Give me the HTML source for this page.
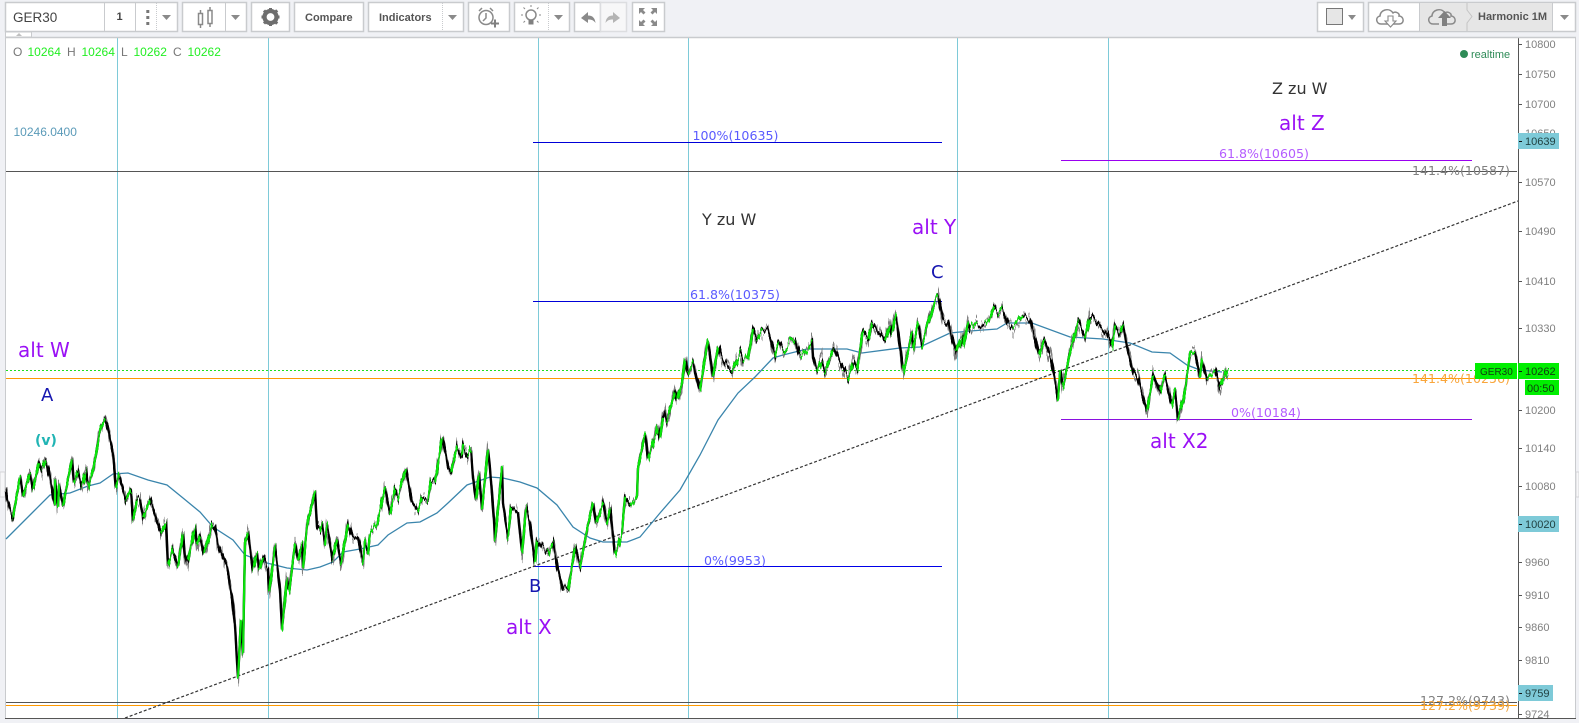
<!DOCTYPE html>
<html><head><meta charset="utf-8"><title>GER30</title>
<style>
html,body{margin:0;padding:0;width:1579px;height:723px;overflow:hidden;background:#f0f1f5}
svg{position:absolute;left:0;top:0;display:block}
text{font-family:"Liberation Sans",sans-serif}
.d{font-family:"DejaVu Sans",sans-serif}
.ax text{font-size:11px;fill:#808080}
.b{fill:#fff;stroke:#c9cbce;stroke-width:1.5}
.t{font-size:11px;font-weight:bold;fill:#555}
.f{font-family:"DejaVu Sans",sans-serif;font-size:12.6px}
.pu{fill:#9a10f5;font-size:20px;font-family:"DejaVu Sans",sans-serif}
.bl{fill:#1616b0;font-size:18px;font-family:"DejaVu Sans",sans-serif}
.ic{fill:none;stroke:#8a8a8a;stroke-width:1.5}
.tr{fill:#8a8a8a}
</style></head><body>
<svg width="1579" height="723" viewBox="0 0 1579 723" xmlns="http://www.w3.org/2000/svg">
<defs>
<filter id="j1" filterUnits="userSpaceOnUse" x="0" y="0" width="1579" height="723" color-interpolation-filters="sRGB">
<feTurbulence type="fractalNoise" baseFrequency="0.55 0.004" numOctaves="1" seed="4" result="n"/>
<feColorMatrix in="n" type="matrix" values="0 0 0 0 0.5  0 1 0 0 0  0 0 0 0 0  0 0 0 0 1" result="m"/>
<feDisplacementMap in="SourceGraphic" in2="m" scale="34" xChannelSelector="R" yChannelSelector="G"/>
</filter>
<filter id="j2" filterUnits="userSpaceOnUse" x="0" y="0" width="1579" height="723" color-interpolation-filters="sRGB">
<feTurbulence type="fractalNoise" baseFrequency="0.45 0.004" numOctaves="1" seed="11" result="n"/>
<feColorMatrix in="n" type="matrix" values="0 0 0 0 0.5  0 1 0 0 0  0 0 0 0 0  0 0 0 0 1" result="m"/>
<feDisplacementMap in="SourceGraphic" in2="m" scale="20" xChannelSelector="R" yChannelSelector="G"/>
</filter>
<polyline id="p" fill="none" points="6,490 7,500 13,517 20,477 23,497 30,473 33,490 39,462 42,470 46,460 50,477 55,506 55,480 58,508 59,485 63,505 72,458 74,483 78,472 82,487 86,470 88,487 93,470 100,430 105,420 108,430 113,453 116,488 119,475 126,500 131,490 133,520 137,500 140,500 143,517 150,500 157,520 161,533 166,522 168,567 173,550 178,565 183,532 185,557 188,563 195,527 197,547 200,537 204,555 212,525 215,528 218,545 227,568 232,597 235,627 238,678 241,620 243,655 245,543 248,532 253,570 257,553 259,570 263,557 268,570 269,593 275,547 280,590 282,630 287,577 289,590 295,543 298,560 302,543 303,570 307,527 315,490 317,527 320,530 322,523 325,543 327,525 333,560 337,540 341,565 348,523 353,537 358,537 363,563 365,542 368,552 370,532 377,525 385,488 390,513 395,490 398,497 406,468 412,503 418,510 422,498 428,500 431,480 435,482 442,437 448,467 451,473 457,447 462,457 463,447 468,457 471,450 473,477 476,500 479,473 482,510 488,447 490,467 494,520 495,542 502,467 503,503 508,537 511,507 518,513 522,553 526,507 530,523 535,563 537,540 542,547 548,553 553,543 558,570 563,590 568,590 575,547 578,560 580,565 587,530 593,503 596,523 603,503 607,523 610,508 615,555 622,533 625,498 630,505 637,497 638,467 645,433 648,460 655,437 658,425 660,438 663,417 665,412 667,420 675,393 677,402 682,383 685,357 688,372 693,363 700,393 708,340 713,377 718,347 722,360 728,368 732,372 740,353 743,362 748,358 753,327 757,338 762,330 768,330 772,343 775,353 778,342 783,350 795,338 800,355 812,342 813,360 817,372 822,360 825,370 833,348 838,358 843,368 848,377 853,362 857,370 863,332 868,340 872,322 880,332 885,340 890,323 892,335 896,315 900,347 903,372 912,333 913,350 918,323 922,345 935,300 938,296 943,320 948,323 956,355 962,337 963,348 968,320 970,329 977,322 985,325 990,320 994,307 998,313 1002,308 1008,323 1013,328 1023,317 1030,320 1035,338 1039,357 1044,340 1051,358 1057,390 1058,397 1060,370 1063,387 1070,353 1078,322 1085,338 1090,315 1102,328 1107,333 1112,347 1115,327 1120,335 1123,327 1127,347 1133,370 1138,378 1145,403 1147,410 1153,375 1160,393 1165,377 1172,407 1175,390 1178,418 1183,400 1190,355 1195,353 1200,377 1202,358 1207,377 1215,370 1220,388 1228,367"/>
</defs>
<!-- chart area -->
<rect x="5.500" y="37.500" width="1570" height="681" fill="#fff" stroke="#c9cbce"/>
<rect x="1576" y="472" width="3" height="25" fill="#f7f7f9" stroke="#d4d4d8" stroke-width="1"/>
<rect x="0" y="472" width="5" height="25" fill="#f7f7f9" stroke="#d4d4d8" stroke-width="1"/>

<!-- vertical lines -->
<g stroke="#7ecad8" stroke-width="1">
<path d="M117.500 38V718M268.500 38V718M538.500 38V718M688.500 38V718M957.500 38V718M1108.500 38V718"/>
</g>

<!-- horizontal lines -->
<path d="M6 171.500H1517" stroke="#555" stroke-width="1"/>
<path d="M6 702.500H1517" stroke="#555" stroke-width="1"/>
<path d="M6 705.500H1517" stroke="#f90" stroke-width="1"/>
<path d="M6 378.500H1517" stroke="#f90" stroke-width="1"/>
<path d="M6 370.500H1475" stroke="#1ee01e" stroke-width="1" stroke-dasharray="2 2"/>
<path d="M533 142.500H942" stroke="#0000d8" stroke-width="1"/>
<path d="M533 301.500H942" stroke="#0000d8" stroke-width="1"/>
<path d="M533 566.500H942" stroke="#0000e8" stroke-width="1"/>
<path d="M1061 160.500H1472" stroke="#9a00f0" stroke-width="1"/>
<path d="M1061 419.500H1472" stroke="#8a10e0" stroke-width="1"/>

<!-- trend line -->
<path d="M125 718L1518 201" stroke="#333" stroke-width="1.200" stroke-dasharray="3 2" fill="none"/>

<!-- moving average -->
<polyline fill="none" stroke="#3a85ac" stroke-width="1.300" points="6,539 20,525 33,512 50,495 70,493 88,486 100,483 113,474 128,473 148,480 167,485 183,498 200,512 213,527 233,540 245,555 267,563 287,568 307,570 320,567 333,562 343,552 360,549 378,545 388,535 407,523 420,522 437,513 448,503 467,485 490,477 503,478 520,482 537,488 557,505 573,527 590,538 603,542 627,542 640,537 660,513 680,490 700,455 718,420 738,393 755,377 773,358 783,355 807,349 847,349 862,353 900,348 920,347 950,333 970,331 997,329 1007,323 1032,323 1070,337 1103,339 1130,343 1152,352 1170,353 1187,365 1200,370 1222,372"/>

<!-- price -->
<use href="#p" stroke="#808080" stroke-width="2" filter="url(#j1)"/>
<g filter="url(#j2)">
<use href="#p" stroke="#000" stroke-width="2.400"/>
<path fill="none" stroke="#0ae60a" stroke-width="2.200" d="M13 517L20 477M23 497L30 473M33 490L39 462M42 470L46 460M55 506L55 480M58 508L59 485M63 505L72 458M74 483L78 472M82 487L86 470M88 487L93 470L100 430L105 420M116 488L119 475M126 500L131 490M133 520L137 500M143 517L150 500M161 533L166 522M168 567L173 550M178 565L183 532M188 563L195 527M197 547L200 537M204 555L212 525M238 678L241 620M243 655L245 543L248 532M253 570L257 553M259 570L263 557M269 593L275 547M282 630L287 577M289 590L295 543M298 560L302 543M303 570L307 527L315 490M320 530L322 523M325 543L327 525M333 560L337 540M341 565L348 523M363 563L365 542M368 552L370 532L377 525L385 488M390 513L395 490M398 497L406 468M418 510L422 498M428 500L431 480M435 482L442 437M451 473L457 447M462 457L463 447M468 457L471 450M476 500L479 473M482 510L488 447M495 542L502 467M508 537L511 507M522 553L526 507M535 563L537 540M548 553L553 543M568 590L575 547M580 565L587 530L593 503M596 523L603 503M607 523L610 508M615 555L622 533L625 498M630 505L637 497L638 467L645 433M648 460L655 437L658 425M660 438L663 417M667 420L675 393M677 402L682 383L685 357M688 372L693 363M700 393L708 340M713 377L718 347M732 372L740 353M743 362L748 358L753 327M757 338L762 330M775 353L778 342M783 350L795 338M800 355L812 342M817 372L822 360M825 370L833 348M848 377L853 362M857 370L863 332M868 340L872 322M885 340L890 323M892 335L896 315M903 372L912 333M913 350L918 323M922 345L935 300L938 296M956 355L962 337M963 348L968 320M970 329L977 322M985 325L990 320L994 307M998 313L1002 308M1013 328L1023 317M1039 357L1044 340M1058 397L1060 370M1063 387L1070 353L1078 322M1085 338L1090 315M1112 347L1115 327M1120 335L1123 327M1147 410L1153 375M1160 393L1165 377M1172 407L1175 390M1178 418L1183 400L1190 355L1195 353M1200 377L1202 358M1207 377L1215 370M1220 388L1228 367"/>
</g>

<!-- fib labels -->
<text class="f" x="692.500" y="140" fill="#5a5aff">100%(10635)</text>
<text class="f" x="690" y="299" fill="#5a5aff">61.8%(10375)</text>
<text class="f" x="704" y="565" fill="#5a5aff">0%(9953)</text>
<text class="f" x="1219" y="158" fill="#b45cff">61.8%(10605)</text>
<text class="f" x="1231" y="417" fill="#b45cff">0%(10184)</text>
<text class="f" x="1412" y="175" fill="#808080">141.4%(10587)</text>
<text class="f" x="1412" y="383" fill="#f9a63c">141.4%(10256)</text>
<text class="f" x="1420" y="705" fill="#808080">127.2%(9743)</text>
<text class="f" x="1420" y="710" fill="#f2a744">127.2%(9739)</text>

<!-- wave labels -->
<text class="pu" x="18" y="357">alt W</text>
<text class="pu" x="1279" y="130">alt Z</text>
<text class="pu" x="912" y="234">alt Y</text>
<text class="pu" x="506" y="634">alt X</text>
<text class="pu" x="1150" y="448">alt X2</text>
<text class="bl" x="41" y="401">A</text>
<text class="bl" x="529" y="592">B</text>
<text class="bl" x="931" y="278">C</text>
<text x="35" y="445" font-size="14" font-weight="bold" fill="#20b4b4" class="d">(v)</text>
<text x="702" y="225" font-size="16" fill="#333" class="d">Y zu W</text>
<text x="1272" y="94" font-size="16" fill="#333" class="d">Z zu W</text>

<!-- OHLC -->
<g font-size="12">
<text x="13" y="56" fill="#777">O</text><text x="27.500" y="56" fill="#22ee22">10264</text>
<text x="67" y="56" fill="#777">H</text><text x="81.500" y="56" fill="#22ee22">10264</text>
<text x="121" y="56" fill="#777">L</text><text x="133.500" y="56" fill="#22ee22">10262</text>
<text x="173" y="56" fill="#777">C</text><text x="187.500" y="56" fill="#22ee22">10262</text>
<text x="13.500" y="136" fill="#5a9ab8">10246.0400</text>
</g>
<circle cx="1464" cy="54" r="4" fill="#2e8b57"/>
<text x="1471" y="58" font-size="11" fill="#2e8b57">realtime</text>

<!-- price axis -->
<path d="M1518.500 38V718M5 718.500H1576" stroke="#555" stroke-width="1" fill="none"/>
<path stroke="#555" d="M1519 44.500h3M1519 74.500h3M1519 104.500h3M1519 182.500h3M1519 231.500h3M1519 281.500h3M1519 328.500h3M1519 410.500h3M1519 448.500h3M1519 486.500h3M1519 562.500h3M1519 595.500h3M1519 627.500h3M1519 660.500h3M1519 714.500h3"/>
<g class="ax">
<text x="1525" y="48">10800</text><text x="1525" y="78">10750</text><text x="1525" y="108">10700</text><text x="1525" y="137">10650</text>
<text x="1525" y="186">10570</text><text x="1525" y="235">10490</text><text x="1525" y="285">10410</text><text x="1525" y="332">10330</text>
<text x="1525" y="414">10200</text><text x="1525" y="452">10140</text><text x="1525" y="490">10080</text>
<text x="1525" y="566">9960</text><text x="1525" y="599">9910</text><text x="1525" y="631">9860</text><text x="1525" y="664">9810</text>
<text x="1525" y="718">9724</text>
</g>
<g font-size="11" fill="#1f3f3f">
<rect x="1518" y="133" width="41" height="16" fill="#7ecad8"/><text x="1525" y="145">10639</text>
<rect x="1518" y="516" width="41" height="16" fill="#7ecad8"/><text x="1525" y="528">10020</text>
<rect x="1518" y="685" width="35" height="16" fill="#7ecad8"/><text x="1525" y="697">9759</text>
</g>
<g fill="#00ee00">
<rect x="1475" y="363" width="42" height="16"/>
<rect x="1518" y="363" width="41" height="16"/>
<rect x="1525" y="380" width="34" height="15"/>
</g>
<g fill="#123a12">
<text x="1480" y="375" font-size="10">GER30</text>
<text x="1525" y="375" font-size="11">10262</text>
<text x="1527" y="392" font-size="11">00:50</text>
</g>
<path stroke="#111" d="M1519 141.500h3M1519 371.500h3M1519 524.500h3M1519 693.500h3"/>

<!-- toolbar -->
<rect x="0" y="0" width="1579" height="37" fill="#f0f1f5"/>
<path d="M5 37.500H1576" stroke="#c9cbce" stroke-width="1.500"/>
<rect x="5.500" y="32" width="26" height="5" fill="#fff" stroke="#c9cbce" stroke-width="1"/>
<path d="M16 36l3-3 3 3z" fill="#c0c0c0"/>

<rect class="b" x="5.500" y="2.500" width="172" height="29"/>
<path d="M104.500 3V31M135.500 3V31" stroke="#c9cbce" stroke-width="1"/>
<path d="M156.500 3V31" stroke="#c9cbce" stroke-dasharray="1 1"/>
<text x="13" y="22" font-size="13.500" fill="#444">GER30</text>
<text x="116.500" y="20" font-size="11" font-weight="bold" fill="#444">1</text>
<path d="M146.300 10h3v3h-3zM146.300 16h3v3h-3zM146.300 22h3v3h-3z" fill="#777"/>
<path class="tr" d="M162 15h9l-4.500 5z"/>

<rect class="b" x="182.500" y="2.500" width="64" height="29"/>
<path d="M225.500 3V31" stroke="#c9cbce"/>
<path d="M198.500 13.500h4v11h-4zM208 10.500h4v13h-4zM200.500 10v3.500M200.500 24.500V28M210 7v3.500M210 23.500V27" class="ic" stroke-width="1.200"/>
<path class="tr" d="M231 15h9l-4.500 5z"/>

<rect class="b" x="251.500" y="2.500" width="38" height="29"/>
<circle cx="270.500" cy="17" r="6" fill="none" stroke="#6e6e6e" stroke-width="4.200"/>
<path d="M270.500 8v3M270.500 23v3M261.500 17h3M276.500 17h3M264 10.500l2.200 2.200M275 21.500l2.200 2.200M264 23.500l2.200-2.200M275 12.500l2.200-2.200" stroke="#6e6e6e" stroke-width="3"/>

<rect class="b" x="294.500" y="2.500" width="69" height="29"/>
<text class="t" x="305" y="21">Compare</text>

<rect class="b" x="368.500" y="2.500" width="95" height="29"/>
<path d="M442.500 3V31" stroke="#c9cbce" stroke-dasharray="1 1"/>
<text class="t" x="379" y="21">Indicators</text>
<path class="tr" d="M448 15h9l-4.500 5z"/>

<rect class="b" x="468.500" y="2.500" width="41" height="29"/>
<circle cx="486" cy="17.500" r="7" class="ic"/>
<path d="M486 13v5l-3 3M479 11l3-3M493 11l-3-3" class="ic"/>
<path d="M491 23.500h8M495 19.500v8" stroke="#808080" stroke-width="2"/>

<rect class="b" x="514.500" y="2.500" width="55" height="29"/>
<path d="M548.500 3V31" stroke="#c9cbce" stroke-dasharray="1 1"/>
<circle cx="531" cy="15" r="5" class="ic"/>
<path d="M528.500 20h5v4.500h-5z" fill="#808080"/>
<path d="M531 7v-2M523 15h-2M541 15h-2M525 9l-1.500-1.500M537 9l1.500-1.500M525 21l-1.500 1.500M537 21l1.500 1.500" stroke="#8a8a8a"/>
<path class="tr" d="M554 15h9l-4.500 5z"/>

<rect class="b" x="574.500" y="2.500" width="26" height="29"/>
<rect x="600.500" y="2.500" width="26" height="29" fill="#f7f7f8" stroke="#dcdde0" stroke-width="1.500"/>
<path d="M581 18l7-6v3.500c5 0 7 3 7.500 7.500-2-3-4-3.500-7.500-3.500V23z" fill="#8a8a8a"/>
<path d="M620 18l-7-6v3.500c-5 0-7 3-7.500 7.500 2-3 4-3.500 7.500-3.500V23z" fill="#b4b4b4"/>

<rect class="b" x="632.500" y="2.500" width="32" height="29"/>
<path class="tr" d="M639 8h6l-2 2 2.500 2.500-2 2L641 12l-2 2zM657 8h-6l2 2-2.500 2.500 2 2L655 12l2 2zM639 26h6l-2-2 2.500-2.500-2-2L641 22l-2-2zM657 26h-6l2-2-2.500-2.500 2-2L655 22l2-2z"/>

<rect class="b" x="1317.500" y="2.500" width="46" height="29"/>
<rect x="1326.500" y="8.500" width="16" height="16" fill="#e6e6e6" stroke="#777"/>
<path class="tr" d="M1348 15h8l-4 5z"/>

<rect class="b" x="1368.500" y="2.500" width="207" height="29"/>
<rect x="1419.500" y="3" width="133" height="28" fill="#e6e6e6"/>
<path d="M1419.500 3V31M1552.500 3V31" stroke="#c9cbce"/>
<path d="M1467 3v7l5 6.500-5 6.500v8" fill="none" stroke="#c4c4c4"/>
<path d="M1381 24c-5 0-6-7-1-8 0-6 9-9 13-3 2-2 7 0 6 3 5 0 6 8 0 8h-6M1381 24h7" class="ic" stroke-width="1.100"/>
<path d="M1388 16h5v5h3l-5.500 6-5.500-6h3z" fill="#fff" stroke="#8a8a8a" stroke-width="1.100"/>
<path d="M1433 24c-5 0-6-7-1-8 0-6 9-9 13-3 2-2 7 0 6 3 5 0 6 8 0 8h-6M1433 24h6" class="ic" stroke-width="1.100"/>
<path d="M1444.500 11l-6.500 7h4v8h5v-8h4z" fill="#808080"/>
<text class="t" x="1478" y="20">Harmonic 1M</text>
<path class="tr" d="M1560 15h9l-4.500 5z"/>
</svg>
</body></html>
